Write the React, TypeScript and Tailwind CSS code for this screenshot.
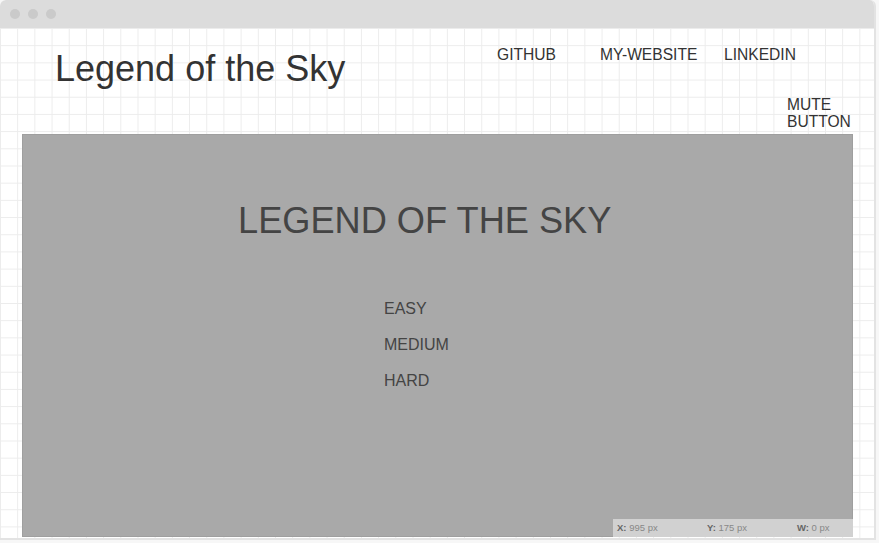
import React from "react";

export default function App() {
  const font = { fontFamily: '"Liberation Sans", Arial, sans-serif' };
  return (
    <div className="w-[879px] h-[543px] bg-[#f7f7f7] overflow-hidden" style={font}>
      <div className="w-[876px] h-[540px] bg-white border-r-2 border-b-2 border-[#e3e3e3] rounded-t-[6px] flex flex-col overflow-hidden">
        <div className="h-[28px] shrink-0 bg-[#dcdcdc] flex items-center gap-[8px] pl-[10px]">
          <div className="w-[10px] h-[10px] rounded-full bg-[#cacaca]" />
          <div className="w-[10px] h-[10px] rounded-full bg-[#cacaca]" />
          <div className="w-[10px] h-[10px] rounded-full bg-[#cacaca]" />
        </div>
        <div className="flex-1 flex flex-col bg-white bg-[linear-gradient(to_right,#ececec_1px,transparent_1px),linear-gradient(to_bottom,#ececec_1px,transparent_1px)] bg-[size:17.2px_17.2px]">
          <div className="h-[106px] shrink-0 flex">
            <div className="w-[497px] shrink-0 pl-[55px] pt-[23px]">
              <h1 className="text-[36px] leading-none text-[#333] whitespace-nowrap">Legend of the Sky</h1>
            </div>
            <div className="flex flex-col">
              <div className="flex pt-[19px] text-[15.6px] leading-none text-[#333] whitespace-nowrap">
                <span className="w-[103px]">GITHUB</span>
                <span className="w-[124px]">MY-WEBSITE</span>
                <span>LINKEDIN</span>
              </div>
              <div className="pl-[290px] pt-[33px] text-[15.6px] leading-[17px] text-[#333] whitespace-nowrap">
                MUTE<br />BUTTON
              </div>
            </div>
          </div>
          <div className="relative ml-[22px] w-[831px] h-[403px] bg-[#a9a9a9] border border-[#9f9f9f]">
            <div className="pl-[215px] pt-[68px] text-[36.2px] leading-none text-[#444] whitespace-nowrap">
              LEGEND OF THE SKY
            </div>
            <div className="pl-[361px] pt-[52px] flex flex-col text-[16px] leading-[36px] text-[#444]">
              <span>EASY</span>
              <span>MEDIUM</span>
              <span>HARD</span>
            </div>
            <div className="absolute right-[-1px] bottom-[-1px] w-[240px] h-[18px] bg-[#d1d1d1] flex items-center text-[9.5px] text-[#888]">
              <span className="w-[90px] pl-[4px]"><b className="text-[#666]">X:</b> 995 px</span>
              <span className="w-[90px] pl-[4px]"><b className="text-[#666]">Y:</b> 175 px</span>
              <span className="pl-[4px]"><b className="text-[#666]">W:</b> 0 px</span>
            </div>
          </div>
        </div>
      </div>
    </div>
  );
}
